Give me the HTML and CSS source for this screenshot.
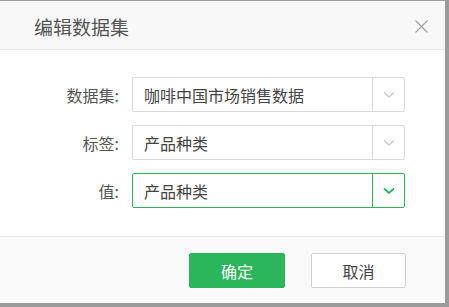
FILE: index.html
```html
<!DOCTYPE html>
<html lang="zh-CN">
<head>
  <meta charset="UTF-8" />
  <title>编辑数据集</title>
  <link rel="stylesheet" href="styles.css">
</head>
<body>
  <div class="dialog">
    <div class="dialog-header">
      <h2>编辑数据集</h2>
      <span class="close">
        <svg width="13" height="13" viewBox="0 0 13 13"><path d="M0.5 0.5L12.5 12.5M12.5 0.5L0.5 12.5" stroke="#a0a0a0" stroke-width="1.1" fill="none"/></svg>
      </span>
    </div>

    <div class="dialog-body">
      <div class="row">
        <label>数据集:</label>
        <div class="select">
          <span class="value">咖啡中国市场销售数据</span>
          <span class="arrow"><svg width="12" height="8" viewBox="0 0 12 8"><path d="M1 1.5L6 6L11 1.5" stroke="#c8c8c8" stroke-width="1.3" fill="none"/></svg></span>
        </div>
      </div>
      <div class="row">
        <label>标签:</label>
        <div class="select">
          <span class="value">产品种类</span>
          <span class="arrow"><svg width="12" height="8" viewBox="0 0 12 8"><path d="M1 1.5L6 6L11 1.5" stroke="#c8c8c8" stroke-width="1.3" fill="none"/></svg></span>
        </div>
      </div>
      <div class="row">
        <label>值:</label>
        <div class="select active">
          <span class="value">产品种类</span>
          <span class="arrow"><svg width="12" height="8" viewBox="0 0 12 8"><path d="M1 1.5L6 6L11 1.5" stroke="#2db55d" stroke-width="1.8" fill="none"/></svg></span>
        </div>
      </div>
    </div>

    <div class="dialog-footer">
      <button class="btn btn-primary">确定</button>
      <button class="btn">取消</button>
    </div>
  </div>
</body>
</html>
```

FILE: styles.css
```css
* {
  box-sizing: border-box;
}

html, body {
  margin: 0;
  padding: 0;
  background: #9b9b9b;
  font-family: "Noto Sans CJK SC", "Liberation Sans", sans-serif;
  color: #333;
}

.dialog {
  width: 445px;
  height: 302px;
  margin-top: 1px;
  background: #fff;
  display: flex;
  flex-direction: column;
}

.dialog-header {
  height: 49px;
  background: #f8f8f8;
  border-bottom: 1px solid #e8e8e8;
  display: flex;
  align-items: center;
  justify-content: space-between;
  padding: 0 17px 0 34px;
}

.dialog-header h2 {
  margin: 0;
  font-size: 19px;
  font-weight: normal;
  color: #555;
  line-height: 1;
  margin-top: 2px;
}

.close {
  display: flex;
  margin-top: 2px;
}

.dialog-body {
  height: 187px;
  padding-top: 27px;
  border-bottom: 1px solid #e8e8e8;
  display: flex;
  flex-direction: column;
  gap: 13px;
}

.row {
  display: grid;
  grid-template-columns: 119px 273px;
  column-gap: 13px;
  align-items: center;
}

.row label {
  text-align: right;
  font-size: 16px;
  color: #555;
}

.select {
  height: 35px;
  border: 1px solid #d9d9d9;
  border-radius: 2px;
  display: flex;
  align-items: center;
}

.select .value {
  flex: 1;
  padding-left: 11px;
  font-size: 16px;
  color: #444;
}

.select .arrow {
  width: 32px;
  height: 100%;
  border-left: 1px solid #d9d9d9;
  display: flex;
  align-items: center;
  justify-content: center;
}

.select.active {
  border-color: #2db55d;
}

.select.active .arrow {
  border-left-color: #2db55d;
}

.dialog-footer {
  flex: 1;
  background: #fafafa;
  display: flex;
  justify-content: flex-end;
  align-items: flex-start;
  gap: 26px;
  padding: 16px 39px 0 0;
}

.btn {
  width: 95px;
  height: 35px;
  border: 1px solid #d0d0d0;
  border-radius: 2px;
  background: #fff;
  color: #444;
  font-family: inherit;
  font-size: 16px;
  cursor: pointer;
}

.btn-primary {
  width: 96px;
  background: #2bb65b;
  border-color: #2bb65b;
  color: #fff;
}
```
